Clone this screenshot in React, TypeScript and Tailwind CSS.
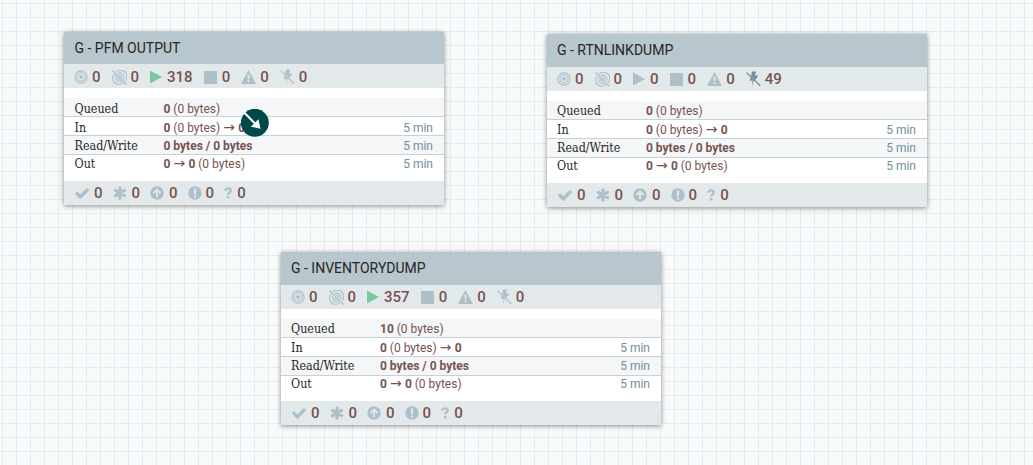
import type { ReactNode } from "react";

type Group = {
  name: string;
  pos: string;
  header: string;
  status: string;
  body: string;
  rows: string;
  running: number;
  disabled: number;
  queued: string;
};

const groups: Group[] = [
  { name: "G - PFM OUTPUT", pos: "left-[64px] top-[32px]", header: "h-[32px] pl-[10.5px]", status: "pt-[2px] pl-[10px]", body: "h-[93px]", rows: "pt-[2px] pl-[10.5px]", running: 318, disabled: 0, queued: "0" },
  { name: "G - RTNLINKDUMP", pos: "left-[547px] top-[34px]", header: "h-[33px] pl-[10px]", status: "pl-[10px]", body: "h-[92px]", rows: "pt-[1px] pl-[10px]", running: 0, disabled: 49, queued: "0" },
  { name: "G - INVENTORYDUMP", pos: "left-[281px] top-[252px]", header: "h-[33px] pl-[10px]", status: "pl-[10px]", body: "h-[92px]", rows: "pt-[1px] pl-[10px]", running: 357, disabled: 0, queued: "10" },
];

const Transmitting = () => (
  <svg viewBox="0 0 14 14" className="size-[14px]" fill="none" stroke="currentColor">
    <circle cx="7" cy="7" r="6.1" strokeWidth="1.1" />
    <circle cx="7" cy="7" r="4" strokeWidth="1.1" />
    <circle cx="7" cy="7" r="1.7" fill="currentColor" strokeWidth="0.5" />
  </svg>
);

const NotTransmitting = () => (
  <svg viewBox="0 0 15 15" className="size-[15px]" fill="none" stroke="currentColor" strokeWidth="1.1">
    <path d="M4 2.2A6.2 6.2 0 0 1 13 10.8M11 12.6A6.2 6.2 0 0 1 2.1 4M5.6 3.8A4.1 4.1 0 0 1 11.3 9.3M9.6 11A4.1 4.1 0 0 1 4 5.6M7.3 5.4A2.1 2.1 0 0 1 9.7 7.8M7.8 9.5A2.1 2.1 0 0 1 5.6 7.3" />
    <path d="M0.5 0.5L14.5 14.5" strokeWidth="1.2" />
  </svg>
);

const Play = () => (
  <svg viewBox="0 0 12 14" className="h-[14px] w-[12px]" fill="currentColor">
    <path d="M0 0.5L12 7L0 13.5Z" />
  </svg>
);

const Stop = () => (
  <svg viewBox="0 0 13 13" className="size-[13px]" fill="currentColor">
    <path d="M0 0H13V13H0Z" />
  </svg>
);

const Warning = () => (
  <svg viewBox="0 0 15 14" className="h-[14px] w-[15px]" fill="currentColor">
    <path fillRule="evenodd" d="M7.5 0L15 14H0ZM6.3 4.7L6.7 9.3H8.3L8.7 4.7ZM6.5 10.2V12H8.5V10.2Z" />
  </svg>
);

const BoltOff = () => (
  <svg viewBox="0 0 15 16" className="h-[16px] w-[15px]" fill="currentColor">
    <path d="M6.2 0.5H10.2L8.8 4.6H12.4L9.2 9L5 4.6ZM4.6 6L7.8 9.3L6 15.5L6.5 9.8H3.8Z" />
    <path d="M0.6 1.6L14.2 14.8" fill="none" stroke="currentColor" strokeWidth="1.2" />
  </svg>
);

const Check = () => (
  <svg viewBox="0 0 1550 1188" className="h-[11px] w-[14px]" fill="currentColor">
    <path d="M1550 232q0 40-28 68L798 1024 662 1160q-28 28-68 28t-68-28L390 1024 28 662Q0 634 0 594t28-68l136-136q28-28 68-28t68 28l294 295 656-657q28-28 68-28t68 28l136 136q28 28 28 68z" />
  </svg>
);

const Asterisk = () => (
  <svg viewBox="0 0 14 14" className="size-[14px]" fill="none" stroke="currentColor" strokeWidth="3.2" strokeLinecap="round">
    <path d="M7 1.8V12.2M2.4 4.4L11.6 9.6M11.6 4.4L2.4 9.6" />
  </svg>
);

const ArrowUp = () => (
  <svg viewBox="0 0 14 14" className="size-[14px]">
    <circle cx="7" cy="7" r="6.7" fill="currentColor" />
    <path d="M7 11.3V4M3.4 7.2L7 3.6L10.6 7.2" fill="none" stroke="#e3e8eb" strokeWidth="1.8" />
  </svg>
);

const Exclaim = () => (
  <svg viewBox="0 0 14 14" className="size-[14px]">
    <circle cx="7" cy="7" r="6.7" fill="currentColor" />
    <path d="M5.8 2.4H8.2L7.9 8.4H6.1ZM5.9 9.5H8.1V11.6H5.9Z" fill="#e3e8eb" />
  </svg>
);

const Question = () => (
  <svg viewBox="0 0 9 13" className="h-[12px] w-[8px]">
    <path d="M1.1 3.8C1.7 1.9 3 1.3 4.5 1.3C6.3 1.3 7.5 2.4 7.5 3.7C7.5 5.7 4.6 5.9 4.6 8.3" fill="none" stroke="currentColor" strokeWidth="2.6" />
    <path d="M3.2 9.9H6V12.6H3.2Z" fill="currentColor" />
  </svg>
);

function Stat({ icon, value, slot, tone = "text-[#adc0ca]" }: { icon: ReactNode; value: number; slot: string; tone?: string }) {
  return (
    <div className="flex items-center">
      <span className={`flex shrink-0 items-center ${slot} ${tone}`}>{icon}</span>
      <span className="text-[15px] leading-[22px] font-medium text-[#775351]">{value}</span>
    </div>
  );
}

function Row({ label, value, time, box }: { label: string; value: ReactNode; time?: boolean; box: string }) {
  return (
    <div className={`flex h-[19px] pr-[11px] ${box}`}>
      <span className="w-[89px] shrink-0 font-['Roboto_Slab','DejaVu_Serif_Condensed','DejaVu_Serif',serif] text-[12.4px] text-[#262626]">{label}</span>
      <span className="text-[12px] text-[#775351]">{value}</span>
      {time && <span className="ml-auto text-[12px] text-[#728e9b]">5 min</span>}
    </div>
  );
}

const Arrow = () => <span className="mx-[2px] inline-block w-[14px] text-center font-['DejaVu_Sans',sans-serif] text-[14px] leading-3">→</span>;

function ProcessGroup({ group }: { group: Group }) {
  return (
    <section className={`absolute w-[380px] bg-white shadow-[0_1px_5px_rgba(0,0,0,0.45)] ${group.pos}`}>
      <h2 className={`flex items-center bg-[#b8c6cd] text-[14px] text-[#262626] ${group.header}`}>{group.name}</h2>
      <div className={`flex h-6 items-center gap-[11px] bg-[#e3e8eb] ${group.status}`}>
        <Stat icon={<Transmitting />} value={0} slot="w-[18px]" />
        <Stat icon={<NotTransmitting />} value={0} slot="w-[19px]" />
        <Stat icon={<Play />} value={group.running} slot="w-[17px]" tone={group.running ? "text-[#7dc7a0]" : "text-[#adc0ca]"} />
        <Stat icon={<Stop />} value={0} slot="w-[18px]" />
        <Stat icon={<Warning />} value={0} slot="w-[19px]" />
        <Stat icon={<BoltOff />} value={group.disabled} slot="w-[19px]" tone={group.disabled ? "text-[#728e9b]" : "text-[#adc0ca]"} />
      </div>
      <div className={`pt-[10px] ${group.body}`}>
        <Row label="Queued" value={<><b>{group.queued}</b> (0 bytes)</>} box={`border-b border-[#c7d2d7] bg-[#f4f6f7] leading-[18px] ${group.rows}`} />
        <Row label="In" value={<><b>0</b> (0 bytes)<Arrow /><b>0</b></>} time box={`border-b border-[#c7d2d7] leading-[18px] ${group.rows}`} />
        <Row label="Read/Write" value={<b>0 bytes / 0 bytes</b>} time box={`border-b border-[#c7d2d7] bg-[#f4f6f7] leading-[16px] ${group.rows}`} />
        <Row label="Out" value={<><b>0</b><Arrow /><b>0</b> (0 bytes)</>} time box={`leading-[14px] ${group.rows}`} />
      </div>
      <div className="flex h-6 items-center gap-[10px] bg-[#e3e8eb] pl-[11px]">
        <Stat icon={<Check />} value={0} slot="w-[19px]" />
        <Stat icon={<Asterisk />} value={0} slot="w-[19px]" />
        <Stat icon={<ArrowUp />} value={0} slot="w-[19px]" />
        <Stat icon={<Exclaim />} value={0} slot="w-[18px]" />
        <Stat icon={<Question />} value={0} slot="w-[13px]" />
      </div>
    </section>
  );
}

export default function App() {
  return (
    <main className="relative h-[465px] w-[1033px] overflow-hidden bg-[#f9fafb] bg-[linear-gradient(to_right,#e5ebed_1px,transparent_1px),linear-gradient(to_bottom,#e5ebed_1px,transparent_1px)] bg-[size:14px_14px] bg-[position:2px_3px] font-['Roboto',sans-serif]">
      {groups.map((group) => (
        <ProcessGroup key={group.name} group={group} />
      ))}
      <svg viewBox="0 0 28 28" className="absolute top-[109px] left-[241px] size-[28px]">
        <circle cx="13.8" cy="13.8" r="14" fill="#004849" />
        <path d="M3.6 4L14.5 15" stroke="#fff" strokeWidth="2" fill="none" />
        <path d="M19.5 19.7L9.8 17.7L17.5 10.3Z" fill="#fff" />
      </svg>
    </main>
  );
}
